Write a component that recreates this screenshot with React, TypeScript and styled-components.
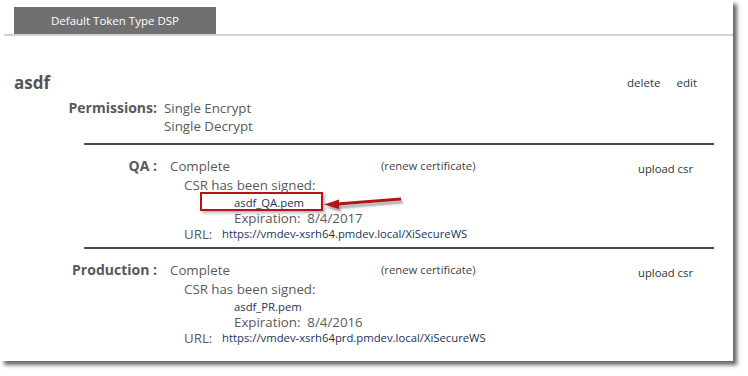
import React from 'react'
import styled, { createGlobalStyle } from 'styled-components'

const GlobalStyle = createGlobalStyle`
  html, body {
    margin: 0;
    background: #fff;
  }
  body {
    font-family: "Open Sans", "Liberation Sans", sans-serif;
    color: #5a5a5a;
  }
`

const Stage = styled.div`
  width: 748px;
  height: 376px;
`

const Window = styled.div`
  width: 733px;
  height: 361px;
  background: #fff;
  box-shadow: 4px 4px 4px rgba(0, 0, 0, 0.6);
`

const TabBar = styled.div`
  display: flex;
  margin-left: 4px;
  padding: 7px 0 0 10px;
  border-bottom: 2px solid #d2d2d2;
`

const Tab = styled.div`
  width: 202px;
  height: 27px;
  display: flex;
  align-items: center;
  justify-content: center;
  background: #707070;
  color: #fff;
  font-size: 11.5px;
`

const Record = styled.div`
  padding: 37px 36px 0 14px;
`

const Header = styled.div`
  display: flex;
  justify-content: space-between;
  align-items: center;
  height: 18px;
`

const Name = styled.h2`
  margin: 0;
  font-size: 17px;
  font-weight: 700;
  color: #555;
`

const Actions = styled.div`
  display: flex;
  gap: 16px;
  font-size: 11.5px;
  color: #2f3550;
`

const Permissions = styled.div`
  display: grid;
  grid-template-columns: 143px 1fr;
  column-gap: 7px;
  margin-top: 8px;
  font-size: 13.3px;
  line-height: 18px;
`

const Label = styled.div`
  display: flex;
  justify-content: flex-end;
  white-space: nowrap;
  font-weight: 700;
  font-size: 14px;
  color: #595959;
`

const Env = styled.section<{ $last?: boolean }>`
  display: grid;
  grid-template-columns: 86px 211px 257px 1fr;
  grid-template-rows: 18px auto;
  margin: 0 19px 0 84px;
  padding: 12px 0 ${(p) => (p.$last ? '0' : '5px')};
  border-top: 2px solid #4a4a4a;
  font-size: 13.3px;
  line-height: 18px;
`

const EnvLabel = styled(Label)`
  padding-right: 13px;
`

const Renew = styled.div`
  font-size: 11.3px;
  color: #444;
`

const Upload = styled.div`
  position: relative;
  top: 3px;
  font-size: 11.3px;
  color: #333;
`

const Details = styled.div`
  grid-column: 2 / -1;
  padding: 1px 0 0 14px;
`

const Line = styled.div<{ $h: number }>`
  height: ${(p) => p.$h}px;
  line-height: ${(p) => p.$h}px;
  white-space: nowrap;
`

const Signed = styled.div`
  padding-left: 50px;
`

const FileName = styled(Line)`
  font-size: 11.3px;
  color: #23325a;
`

const Callout = styled.span`
  position: relative;
  display: inline-block;
  &::before {
    content: '';
    position: absolute;
    top: -2px;
    left: -34px;
    width: 123px;
    height: 19px;
    box-sizing: border-box;
    border: 2px solid #b3141b;
    box-shadow: 2px 2px 3px rgba(0, 0, 0, 0.3);
  }
`

const Arrow = styled.svg`
  position: absolute;
  left: 90px;
  top: -1px;
`

const UrlRow = styled(Line)`
  display: flex;
`

const UrlLabel = styled.span`
  width: 38px;
`

const Url = styled.span`
  font-size: 11.3px;
  color: #23325a;
`

type Cert = {
  env: string
  file: string
  expires: string
  url: string
  highlight?: boolean
}

const certs: Cert[] = [
  {
    env: 'QA :',
    file: 'asdf_QA.pem',
    expires: '8/4/2017',
    url: 'https://vmdev-xsrh64.pmdev.local/XiSecureWS',
    highlight: true,
  },
  {
    env: 'Production :',
    file: 'asdf_PR.pem',
    expires: '8/4/2016',
    url: 'https://vmdev-xsrh64prd.pmdev.local/XiSecureWS',
  },
]

function PointerArrow() {
  return (
    <Arrow width="82" height="20" viewBox="0 0 82 20">
      <defs>
        <filter id="soft" x="-20%" y="-50%" width="140%" height="200%">
          <feGaussianBlur stdDeviation="1.2" />
        </filter>
      </defs>
      <g opacity="0.35" filter="url(#soft)" transform="translate(2 3)">
        <path d="M13 11 L77 6" stroke="#000" strokeWidth="3" />
        <polygon points="0,11.5 15,6.5 15,16" fill="#000" />
      </g>
      <path d="M13 11 L77 6" stroke="#b3141b" strokeWidth="3" />
      <polygon points="0,11.5 15,6.5 15,16" fill="#b3141b" />
    </Arrow>
  )
}

function CertBlock({ cert, last }: { cert: Cert; last?: boolean }) {
  return (
    <Env $last={last}>
      <EnvLabel>{cert.env}</EnvLabel>
      <div>Complete</div>
      <Renew>(renew certificate)</Renew>
      <Upload>upload csr</Upload>
      <Details>
        <Line $h={18}>CSR has been signed:</Line>
        <Signed>
          <FileName $h={17}>
            {cert.highlight ? (
              <Callout>
                {cert.file}
                <PointerArrow />
              </Callout>
            ) : (
              cert.file
            )}
          </FileName>
          <Line $h={15}>Expiration:&nbsp; {cert.expires}</Line>
        </Signed>
        <UrlRow $h={16}>
          <UrlLabel>URL:</UrlLabel>
          <Url>{cert.url}</Url>
        </UrlRow>
      </Details>
    </Env>
  )
}

export default function App() {
  return (
    <Stage>
      <GlobalStyle />
      <Window>
        <TabBar>
          <Tab>Default Token Type DSP</Tab>
        </TabBar>
        <Record>
          <Header>
            <Name>asdf</Name>
            <Actions>
              <span>delete</span>
              <span>edit</span>
            </Actions>
          </Header>
          <Permissions>
            <Label>Permissions:</Label>
            <div>
              Single Encrypt
              <br />
              Single Decrypt
            </div>
          </Permissions>
        </Record>
        <div style={{ height: 8 }} />
        {certs.map((c, i) => (
          <CertBlock key={c.env} cert={c} last={i === certs.length - 1} />
        ))}
      </Window>
    </Stage>
  )
}
